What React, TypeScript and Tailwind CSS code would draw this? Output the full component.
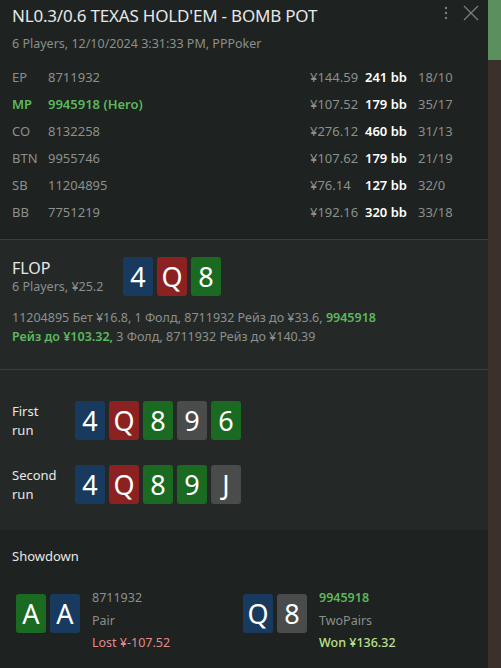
import React from 'react'

type Suit = 'c' | 'd' | 'h' | 's'

const SUIT_BG: Record<Suit, string> = {
  d: 'bg-[#173a5e]',
  h: 'bg-[#8b2121]',
  c: 'bg-[#1b6a21]',
  s: 'bg-[#4a4b4b]',
}

const PLAYERS = [
  { pos: 'EP', id: '8711932', stack: '¥144.59', bb: '241 bb', stats: '18/10' },
  { pos: 'MP', id: '9945918 (Hero)', stack: '¥107.52', bb: '179 bb', stats: '35/17', hero: true },
  { pos: 'CO', id: '8132258', stack: '¥276.12', bb: '460 bb', stats: '31/13' },
  { pos: 'BTN', id: '9955746', stack: '¥107.62', bb: '179 bb', stats: '21/19' },
  { pos: 'SB', id: '11204895', stack: '¥76.14', bb: '127 bb', stats: '32/0' },
  { pos: 'BB', id: '7751219', stack: '¥192.16', bb: '320 bb', stats: '33/18' },
]

function Card({ rank, suit }: { rank: string; suit: Suit }) {
  return (
    <div className={`w-[30px] h-[39px] rounded-[3px] flex items-center justify-center text-white text-[27px] leading-none ${SUIT_BG[suit]}`}>
      {rank}
    </div>
  )
}

function Board({ cards }: { cards: [string, Suit][] }) {
  return (
    <div className="flex gap-[4px]">
      {cards.map(([r, s], i) => <Card key={i} rank={r} suit={s} />)}
    </div>
  )
}

export default function App() {
  return (
    <div className="flex w-[501px] h-[668px] overflow-hidden text-[#e6e8e6]" style={{ fontFamily: '"Noto Sans", "Open Sans", sans-serif' }}>
      <div className="w-[488px] flex flex-col bg-[#1e2220]">

        {/* Header */}
        <div className="px-3 pt-[4px] pb-[13px] relative">
          <h1 className="text-[17px] leading-[24px] tracking-[-0.2px]">NL0.3/0.6 TEXAS HOLD'EM - BOMB POT</h1>
          <p className="text-[12.5px] leading-[20px] text-[#8b908d] mt-[6px]">6 Players, 12/10/2024 3:31:33 PM, PPPoker</p>
          <div className="absolute right-[8px] top-[4px] flex items-center gap-[14px] text-[#7a7f7c]">
            <svg width="4" height="14" viewBox="0 0 4 14"><circle cx="2" cy="2" r="1.2" fill="currentColor" /><circle cx="2" cy="7" r="1.2" fill="currentColor" /><circle cx="2" cy="12" r="1.2" fill="currentColor" /></svg>
            <svg width="18" height="18" viewBox="0 0 18 18" stroke="currentColor" strokeWidth="1.3"><path d="M2 2 L16 16 M16 2 L2 16" /></svg>
          </div>

          <div className="mt-[10px] flex flex-col">
            {PLAYERS.map((p) => (
              <div key={p.pos} className="h-[27px] flex items-center text-[13px]">
                <span className={`w-[36px] ${p.hero ? 'text-[#5cb85c] font-semibold' : 'text-[#8b908d]'}`}>{p.pos}</span>
                <span className={`flex-1 ${p.hero ? 'text-[#5cb85c] font-semibold' : 'text-[#8b908d]'}`}>{p.id}</span>
                <span className="w-[55px] text-[#8b908d]">{p.stack}</span>
                <span className="w-[53px] font-semibold text-white">{p.bb}</span>
                <span className="w-[58px] text-[#8b908d]">{p.stats}</span>
              </div>
            ))}
          </div>
        </div>

        {/* Flop */}
        <div className="bg-[#242928] border-t border-[#3a3f3d] px-3 pt-[17px] pb-[23px]">
          <div className="flex items-center gap-[12px]">
            <div className="w-[99px]">
              <div className="text-[16px] leading-[20px]">FLOP</div>
              <div className="text-[12.5px] leading-[18px] text-[#8b908d]">6 Players, ¥25.2</div>
            </div>
            <Board cards={[['4', 'd'], ['Q', 'h'], ['8', 'c']]} />
          </div>
          <p className="mt-[12px] text-[12.5px] leading-[19px] text-[#8b908d]">
            11204895 Бет ¥16.8, 1 Фолд, 8711932 Рейз до ¥33.6, <span className="text-[#5cb85c] font-semibold">9945918</span>
            <br />
            <span className="text-[#5cb85c] font-semibold">Рейз до ¥103.32,</span> 3 Фолд, 8711932 Рейз до ¥140.39
          </p>
        </div>

        {/* Runs */}
        <div className="bg-[#242928] border-t border-[#3a3f3d] px-3 pt-[31px] pb-[26px] flex flex-col gap-[25px]">
          {[
            { label: ['First', 'run'], cards: [['4', 'd'], ['Q', 'h'], ['8', 'c'], ['9', 's'], ['6', 'c']] as [string, Suit][] },
            { label: ['Second', 'run'], cards: [['4', 'd'], ['Q', 'h'], ['8', 'c'], ['9', 'c'], ['J', 's']] as [string, Suit][] },
          ].map((r) => (
            <div key={r.label[0]} className="flex items-center">
              <div className="w-[63px] text-[13px] leading-[19px]">{r.label[0]}<br />{r.label[1]}</div>
              <Board cards={r.cards} />
            </div>
          ))}
        </div>

        {/* Showdown */}
        <div className="flex-1 px-3 pt-[17px]">
          <div className="text-[13px] leading-[18px]">Showdown</div>
          <div className="mt-[8px] flex">
            <div className="w-[231px] flex items-center pl-[4px]">
              <Board cards={[['A', 'c'], ['A', 'd']]} />
              <div className="ml-[12px] mt-[14px] text-[12.5px] leading-[22.5px]">
                <div className="text-[#8b908d]">8711932</div>
                <div className="text-[#8b908d]">Pair</div>
                <div className="text-[#e38b8b]">Lost ¥-107.52</div>
              </div>
            </div>
            <div className="flex items-center">
              <Board cards={[['Q', 'd'], ['8', 's']]} />
              <div className="ml-[12px] mt-[14px] text-[12.5px] leading-[22.5px]">
                <div className="text-[#5cb85c] font-semibold">9945918</div>
                <div className="text-[#8b908d]">TwoPairs</div>
                <div className="text-[#b9e28f] font-medium">Won ¥136.32</div>
              </div>
            </div>
          </div>
        </div>
      </div>

      <div className="w-[13px] flex flex-col">
        <div className="h-[60px] bg-[#5a8f5e]" />
        <div className="flex-1 bg-[#3b302a]" />
      </div>
    </div>
  )
}
